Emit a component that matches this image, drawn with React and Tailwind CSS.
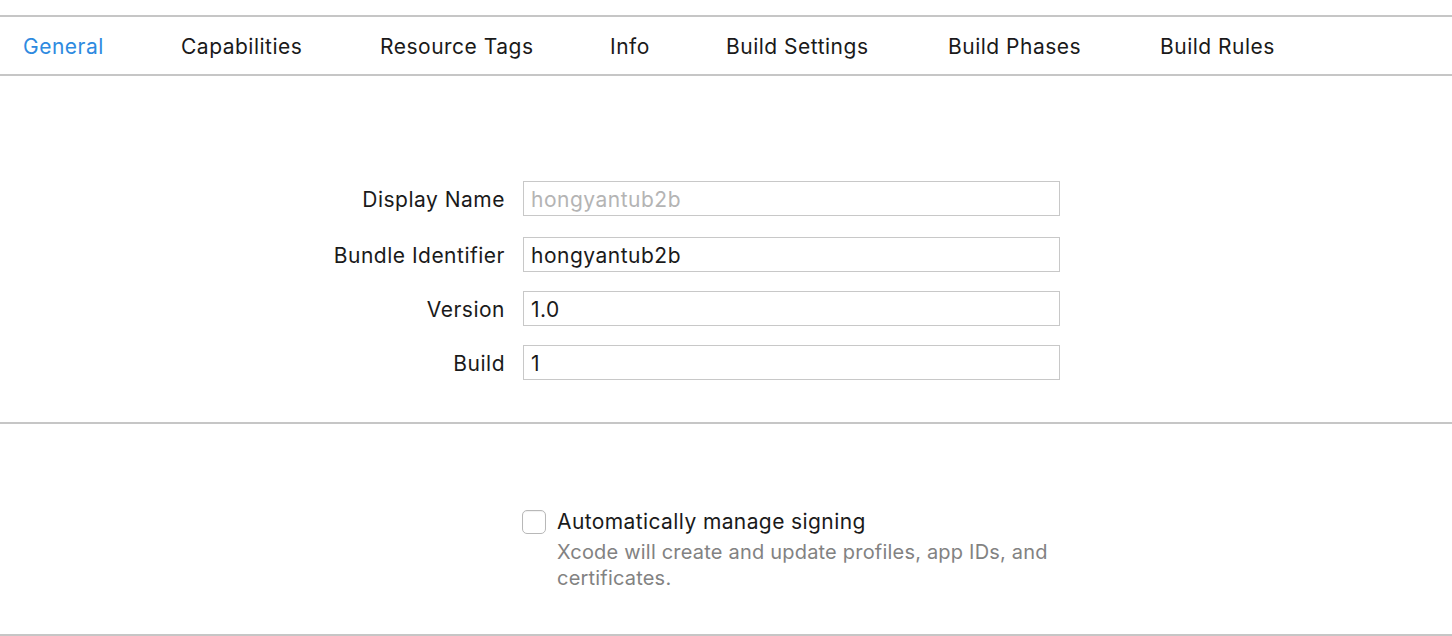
const tabs = [
  { label: 'General', w: 'w-[158px]', active: true },
  { label: 'Capabilities', w: 'w-[199px]' },
  { label: 'Resource Tags', w: 'w-[230px]' },
  { label: 'Info', w: 'w-[116px]' },
  { label: 'Build Settings', w: 'w-[222px]' },
  { label: 'Build Phases', w: 'w-[212px]' },
  { label: 'Build Rules', w: 'w-[160px]' },
];

const fields = [
  { label: 'Display Name', value: 'hongyantub2b', placeholder: true, mt: 'mt-0' },
  { label: 'Bundle Identifier', value: 'hongyantub2b', mt: 'mt-[21px]' },
  { label: 'Version', value: '1.0', mt: 'mt-[19px]' },
  { label: 'Build', value: '1', mt: 'mt-[19px]' },
];

export default function App() {
  return (
    <div className="h-[636px] w-[1452px] bg-white text-[#1a1a1a] overflow-hidden" style={{ fontFamily: 'Inter, "Noto Sans", sans-serif' }}>
      <div className="h-[15px]" />
      <div className="h-[2px] bg-[#c6c6c6]" />

      {/* tab bar */}
      <nav className="flex h-[57px] items-center pl-[23px] pt-[2px] text-[21px] tracking-[0.5px]">
        {tabs.map(t => (
          <div key={t.label} className={`${t.w} shrink-0 ${t.active ? 'text-[#2e8ae0]' : 'text-[#1a1a1a]'}`}>
            {t.label}
          </div>
        ))}
      </nav>
      <div className="h-[2px] bg-[#c6c6c6]" />

      {/* identity */}
      <section className="h-[346px] pt-[105px] text-[21px] leading-[28px] tracking-[0.5px]">
        {fields.map(f => (
          <div key={f.label} className={`flex h-[35px] items-center ${f.mt}`}>
            <div className="w-[505px] shrink-0 pt-[3px] text-right">{f.label}</div>
            <div className={`ml-[18px] flex h-[35px] w-[537px] items-center border border-[#c8c8c8] px-[7px] pt-[3px] ${f.placeholder ? 'text-[#b4b4b4]' : 'text-[#1a1a1a]'}`}>
              {f.value}
            </div>
          </div>
        ))}
      </section>
      <div className="h-[2px] bg-[#c6c6c6]" />

      {/* signing */}
      <section className="h-[210px] pl-[522px] pt-[82px]">
        <div className="flex items-center">
          <div className="h-[24px] w-[24px] rounded-[5px] border border-[#b8b8b8] bg-white shadow-[inset_0_1px_1px_rgba(0,0,0,0.06)]" />
          <span className="ml-[11px] text-[21px] tracking-[0.4px]">Automatically manage signing</span>
        </div>
        <p className="ml-[35px] mt-[1px] text-[20px] leading-[26px] tracking-[0.2px] text-[#828282]">
          Xcode will create and update profiles, app IDs, and
          <br />
          certificates.
        </p>
      </section>
      <div className="h-[2px] bg-[#c6c6c6]" />
    </div>
  );
}
